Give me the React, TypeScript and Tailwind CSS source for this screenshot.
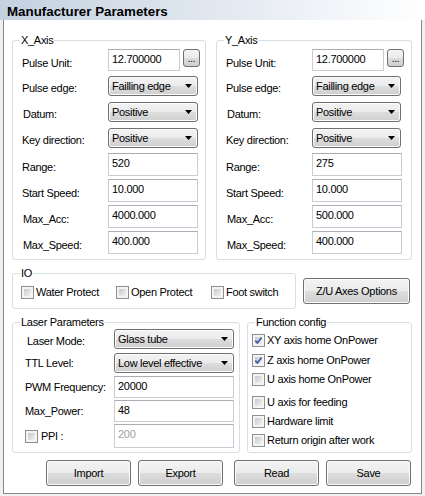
import React from "react";

const btnBg =
  "bg-[linear-gradient(to_bottom,#f3f3f3_0%,#ebebeb_50%,#dddddd_51%,#cfcfcf_100%)]";

function Arrow() {
  return (
    <svg width="7" height="4" viewBox="0 0 7 4" className="shrink-0">
      <path d="M0 0H7L3.5 4Z" fill="#000" />
    </svg>
  );
}

function Select({ value, w }: { value: string; w: string }) {
  return (
    <div
      className={`flex h-[20px] ${w} items-center justify-between rounded-[3px] border border-[#707070] ${btnBg} pl-[3px] pr-[5px] shadow-[inset_0_0_0_1px_#fbfbfb]`}
    >
      <span className="leading-[14px]">{value}</span>
      <Arrow />
    </div>
  );
}

function TextBox({
  value,
  w,
  h,
  gray,
}: {
  value: string;
  w: string;
  h: string;
  gray?: boolean;
}) {
  return (
    <div
      className={`${w} ${h} border border-[#c9ccd2] border-t-[#abadb3] bg-white pl-[3px] pt-[2px] leading-[14px] ${
        gray ? "text-[#a0a0a0]" : "text-black"
      }`}
    >
      {value}
    </div>
  );
}

function Button({
  label,
  w,
  h,
}: {
  label: string;
  w: string;
  h: string;
}) {
  return (
    <div
      className={`flex ${w} ${h} items-center justify-center rounded-[3px] border border-[#707070] ${btnBg} shadow-[inset_0_0_0_1px_#fbfbfb] leading-[14px]`}
    >
      {label}
    </div>
  );
}

function CheckBox({ checked }: { checked?: boolean }) {
  return (
    <span className="relative block h-[13px] w-[13px] shrink-0 border border-[#8e8f8f] bg-[#f4f4f4] p-[2px]">
      <span className="block h-full w-full bg-linear-to-br from-[#c6c9cd] to-[#f2f2f2]" />
      {checked && (
        <svg
          width="11"
          height="11"
          viewBox="0 0 11 11"
          className="absolute left-0 top-0"
        >
          <path
            d="M2.3 5.6 L4.4 7.9 L8.6 2.4"
            fill="none"
            stroke="#3c5a9c"
            strokeWidth="1.7"
          />
        </svg>
      )}
    </span>
  );
}

function Group({
  title,
  className,
  children,
}: {
  title: string;
  className: string;
  children?: React.ReactNode;
}) {
  return (
    <div
      className={`relative rounded-[3px] border border-[#d5dfe5] ${className}`}
    >
      <span className="absolute left-[7px] top-[-8px] bg-white px-[1px] leading-[14px]">
        {title}
      </span>
      {children}
    </div>
  );
}

type Row = {
  label: string;
  kind: "unit" | "select" | "text";
  value: string;
  h: string;
  dx?: boolean;
};

function AxisGroup({
  title,
  rows,
  className,
  selW,
}: {
  title: string;
  rows: Row[];
  className: string;
  selW: string;
}) {
  return (
    <Group title={title} className={className}>
      <div className="flex flex-col pl-[9px] pt-[8px]">
        {rows.map((r, i) => (
          <div key={i} className={`flex ${r.h}`}>
            <span
              className={`w-[86px] shrink-0 leading-[14px] ${
                r.kind === "select" ? "mt-[5px]" : "mt-[7px]"
              } ${r.dx ? "pl-[1px]" : ""}`}
            >
              {r.label}
            </span>
            {r.kind === "unit" && (
              <div className="flex gap-[3px]">
                <TextBox value={r.value} w="w-[72px]" h="h-[22px]" />
                <div
                  className={`flex h-[18px] w-[17px] items-end justify-center rounded-[3px] border border-[#707070] ${btnBg} pb-[2px] text-[10px] leading-[10px]`}
                >
                  ...
                </div>
              </div>
            )}
            {r.kind === "select" && <Select value={r.value} w={selW} />}
            {r.kind === "text" && (
              <TextBox value={r.value} w="w-[90px]" h="h-[23px]" />
            )}
          </div>
        ))}
      </div>
    </Group>
  );
}

function axisRows(
  range: string,
  acc: string
): Row[] {
  return [
    { label: "Pulse Unit:", kind: "unit", value: "12.700000", h: "h-[27px]" },
    { label: "Pulse edge:", kind: "select", value: "Failling edge", h: "h-[26px]" },
    { label: "Datum:", kind: "select", value: "Positive", h: "h-[26px]", dx: true },
    { label: "Key direction:", kind: "select", value: "Positive", h: "h-[25px]" },
    { label: "Range:", kind: "text", value: range, h: "h-[26px]" },
    { label: "Start Speed:", kind: "text", value: "10.000", h: "h-[26px]" },
    { label: "Max_Acc:", kind: "text", value: acc, h: "h-[26px]", dx: true },
    { label: "Max_Speed:", kind: "text", value: "400.000", h: "h-[23px]", dx: true },
  ];
}

const funcRows: { label: string; checked?: boolean; mt: string }[] = [
  { label: "XY axis home OnPower", checked: true, mt: "mt-[9px]" },
  { label: "Z axis home OnPower", checked: true, mt: "mt-[4px]" },
  { label: "U axis home OnPower", mt: "mt-[3px]" },
  { label: "U axis for feeding", mt: "mt-[7px]" },
  { label: "Hardware limit", mt: "mt-[3px]" },
  { label: "Return origin after work", mt: "mt-[3px]" },
];

export default function App() {
  return (
    <div className="flex h-[496px] w-[425px] flex-col bg-[#f0f0f0] text-[11px] tracking-[-0.3px] text-black [font-family:'Liberation_Sans',Arial,sans-serif]">
      <div className="h-[20px] shrink-0 bg-linear-to-r from-[#c4d1e1] to-[#ffffff] pl-[7px] pt-[4px] text-[13.33px] font-bold leading-[16px] tracking-normal">
        Manufacturer Parameters
      </div>
      <div className="mx-[3px] mb-[2px] flex flex-1 flex-col border-x border-b border-[#828790] bg-white pl-[8px] pt-[20px]">
        {/* Axes */}
        <div className="flex gap-[10px]">
          <AxisGroup
            title="X_Axis"
            rows={axisRows("520", "4000.000")}
            className="h-[220px] w-[194px]"
            selW="w-[90px]"
          />
          <AxisGroup
            title="Y_Axis"
            rows={axisRows("275", "500.000")}
            className="h-[220px] w-[196px]"
            selW="w-[89px]"
          />
        </div>

        {/* IO */}
        <div className="mt-[13px] flex">
          <Group title="IO" className="h-[36px] w-[284px]">
            <div className="flex pl-[8px] pt-[11px]">
              {[
                ["Water Protect", "w-[95px]"],
                ["Open Protect", "w-[95px]"],
                ["Foot switch", "w-[80px]"],
              ].map(([t, w]) => (
                <div key={t} className={`flex h-[14px] ${w} items-center gap-[2px]`}>
                  <CheckBox />
                  <span className="leading-[14px]">{t}</span>
                </div>
              ))}
            </div>
          </Group>
          <div className="ml-[7px] mt-[5px]">
            <Button label="Z/U Axes Options" w="w-[107px]" h="h-[26px]" />
          </div>
        </div>

        {/* Laser + Function */}
        <div className="mt-[13px] flex gap-[7px]">
          <Group title="Laser Parameters" className="h-[131px] w-[228px]">
            <div className="flex flex-col pl-[12px] pt-[6px]">
              <div className="flex h-[24px]">
                <span className="mt-[5px] w-[89px] shrink-0 pl-[2px] leading-[14px]">
                  Laser Mode:
                </span>
                <Select value="Glass tube" w="w-[120px]" />
              </div>
              <div className="flex h-[23px]">
                <span className="mt-[3px] w-[89px] shrink-0 leading-[14px]">
                  TTL Level:
                </span>
                <Select value="Low level effective" w="w-[120px]" />
              </div>
              <div className="flex h-[24px]">
                <span className="mt-[4px] w-[89px] shrink-0 leading-[14px]">
                  PWM Frequency:
                </span>
                <TextBox value="20000" w="w-[120px]" h="h-[22px]" />
              </div>
              <div className="flex h-[24px]">
                <span className="mt-[4px] w-[89px] shrink-0 leading-[14px]">
                  Max_Power:
                </span>
                <TextBox value="48" w="w-[120px]" h="h-[22px]" />
              </div>
              <div className="flex h-[24px]">
                <div className="flex h-[24px] w-[89px] shrink-0 items-center gap-[3px]">
                  <CheckBox />
                  <span className="leading-[14px]">PPI :</span>
                </div>
                <TextBox value="200" w="w-[120px]" h="h-[24px]" gray />
              </div>
            </div>
          </Group>
          <Group title="Function config" className="h-[131px] w-[165px]">
            <div className="flex flex-col pl-[4px]">
              {funcRows.map((r) => (
                <div
                  key={r.label}
                  className={`flex h-[16px] items-center gap-[2px] ${r.mt}`}
                >
                  <CheckBox checked={r.checked} />
                  <span className="leading-[14px]">{r.label}</span>
                </div>
              ))}
            </div>
          </Group>
        </div>

        {/* Buttons */}
        <div className="mt-[7px] flex pl-[34px]">
          <Button label="Import" w="w-[85px]" h="h-[26px]" />
          <div className="ml-[7px]">
            <Button label="Export" w="w-[85px]" h="h-[26px]" />
          </div>
          <div className="ml-[11px]">
            <Button label="Read" w="w-[85px]" h="h-[26px]" />
          </div>
          <div className="ml-[7px]">
            <Button label="Save" w="w-[85px]" h="h-[26px]" />
          </div>
        </div>
      </div>
    </div>
  );
}
